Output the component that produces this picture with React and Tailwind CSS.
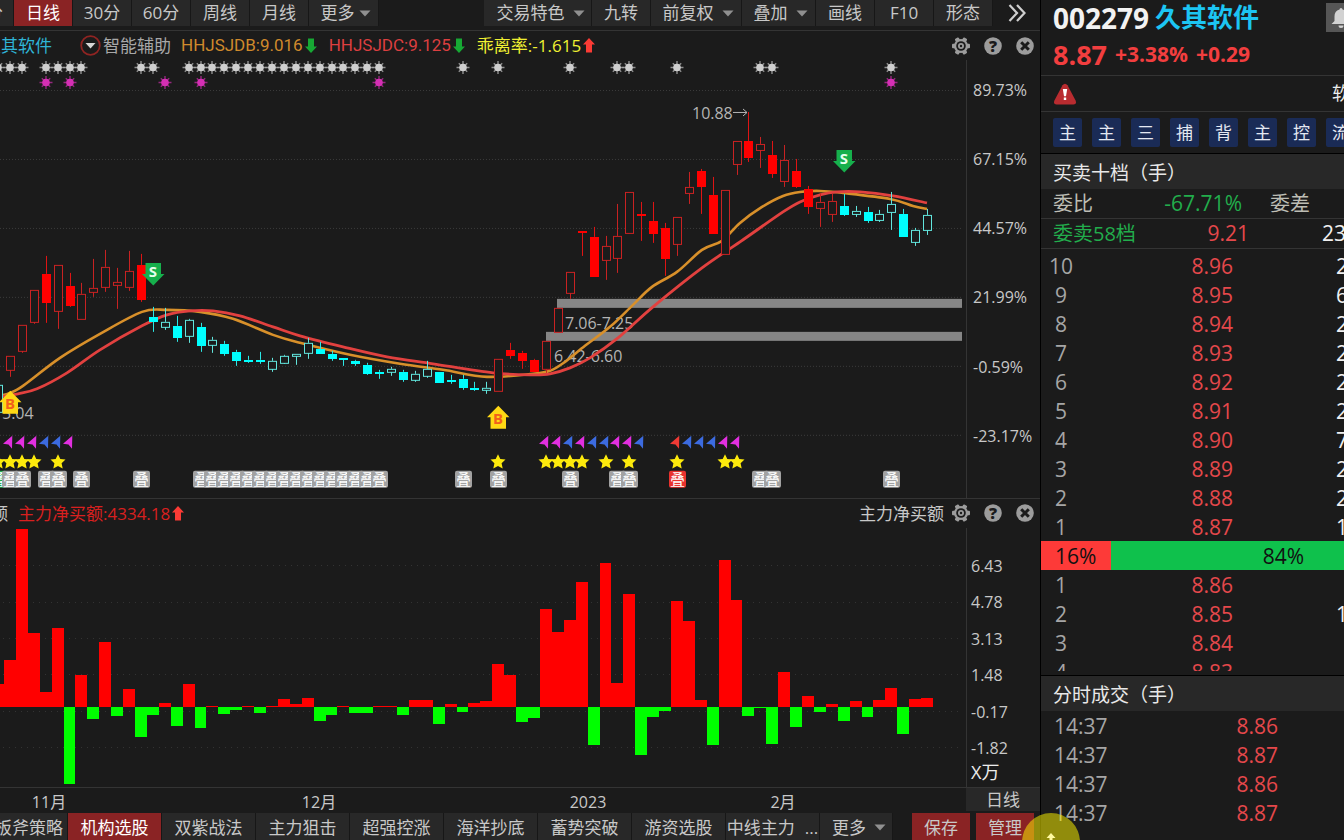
import React from 'react';
import clsx from 'clsx';

const STEP = 11.91;
const centerX = (i) => Math.round(10 + STEP * i);
const barX = (i) => Math.round(4 + STEP * i);
const range = (from, to) => Array.from({ length: to - from + 1 }, (_, i) => from + i);

// [high, bodyTop, bodyBottom, low, type]  u/d = red hollow/filled, c/f = cyan hollow/filled
const candles = [
  [385, 385, 412, 412, 'c'], [356, 356, 370, 377, 'u'], [325, 325, 351, 353, 'u'], [290, 290, 322, 324, 'u'],
  [256, 274, 303, 323, 'd'], [265, 265, 311, 329, 'u'], [273, 286, 306, 307, 'd'], [283, 294, 319, 319, 'u'],
  [259, 288, 292, 297, 'u'], [250, 267, 287, 292, 'u'], [268, 282, 285, 309, 'u'], [251, 271, 287, 291, 'u'],
  [254, 265, 300, 302, 'd'], [307, 317, 322, 332, 'f'], [308, 322, 327, 330, 'c'], [316, 326, 338, 342, 'f'],
  [319, 320, 336, 343, 'c'], [323, 327, 346, 352, 'f'], [337, 340, 345, 353, 'c'], [341, 344, 354, 356, 'f'],
  [350, 352, 361, 366, 'f'], [356, 360, 362, 363, 'f'], [352, 360, 362, 364, 'f'], [358, 361, 369, 372, 'c'],
  [355, 356, 363, 364, 'c'], [354, 354, 356, 365, 'c'], [338, 343, 353, 359, 'c'], [342, 349, 354, 354, 'f'],
  [351, 354, 359, 361, 'f'], [358, 358, 360, 366, 'f'], [360, 361, 364, 366, 'f'], [363, 365, 374, 375, 'f'],
  [370, 372, 374, 379, 'f'], [367, 369, 372, 376, 'c'], [370, 372, 380, 382, 'f'], [371, 374, 380, 382, 'c'],
  [361, 369, 376, 378, 'c'], [372, 372, 383, 383, 'f'], [375, 380, 382, 384, 'f'], [375, 379, 388, 390, 'f'],
  [382, 388, 390, 391, 'f'], [382, 388, 390, 394, 'c'], [359, 359, 391, 391, 'u'], [343, 350, 356, 359, 'd'],
  [351, 353, 361, 369, 'd'], [359, 360, 372, 372, 'd'], [341, 341, 369, 373, 'u'], [308, 308, 332, 332, 'u'],
  [272, 272, 293, 299, 'u'], [231, 231, 233, 256, 'd'], [227, 237, 277, 277, 'd'], [236, 246, 260, 280, 'u'],
  [204, 236, 258, 273, 'u'], [192, 192, 233, 233, 'u'], [202, 214, 216, 241, 'd'], [202, 221, 234, 243, 'd'],
  [223, 228, 259, 276, 'd'], [217, 217, 244, 256, 'u'], [172, 187, 193, 204, 'u'], [169, 171, 187, 214, 'd'],
  [177, 195, 234, 234, 'd'], [190, 190, 254, 254, 'u'], [141, 141, 164, 175, 'u'], [112, 141, 158, 162, 'd'],
  [137, 144, 150, 168, 'u'], [141, 155, 174, 178, 'd'], [145, 160, 181, 187, 'u'], [159, 171, 187, 188, 'd'],
  [186, 189, 207, 214, 'd'], [193, 202, 208, 227, 'u'], [194, 201, 214, 222, 'u'], [194, 206, 215, 216, 'f'],
  [206, 211, 214, 217, 'c'], [207, 212, 221, 223, 'f'], [210, 214, 220, 222, 'c'], [192, 204, 212, 230, 'c'],
  [209, 214, 237, 237, 'f'], [228, 230, 242, 246, 'c'], [209, 215, 230, 235, 'c'],
];

// y of the bar's end, red above the base line and green below it
const BASE = 707;
const flows = [
  684, 660, 529, 633, 692, 628, 784, 675, 719, 642, 716, 689, 737, 715, 703, 726, 684, 728, 706, 714,
  710, 706, 713, 706, 699, 704, 698, 721, 715, 706, 713, 713, 706, 706, 715, 700, 700, 724, 704, 712,
  703, 701, 664, 675, 722, 718, 609, 632, 620, 582, 745, 563, 683, 594, 755, 717, 711, 601, 621, 700,
  745, 560, 600, 716, 708, 744, 672, 727, 696, 712, 704, 721, 701, 717, 700, 688, 734, 699, 698,
];

const fastLine = [
  [0, 396], [10, 393], [23, 386], [60, 358], [100, 334], [142, 312], [167, 310], [200, 312], [233, 319],
  [273, 335], [300, 343], [350, 355], [400, 364], [443, 370], [487, 377], [533, 374], [550, 371], [565, 362],
  [585, 346], [610, 327], [633, 305], [652, 287], [677, 272], [702, 250], [722, 241], [740, 223], [762, 207],
  [783, 196], [800, 192], [820, 191], [843, 193], [890, 199], [913, 206], [927, 209],
];
const slowLine = [
  [0, 397], [18, 394], [37, 389], [67, 373], [100, 350], [142, 326], [167, 315], [190, 311], [213, 311],
  [240, 316], [273, 327], [300, 336], [343, 347], [387, 357], [433, 364], [493, 373], [533, 375], [550, 374],
  [570, 368], [590, 358], [618, 338], [653, 307], [702, 268], [740, 242], [783, 212], [800, 202], [820, 195],
  [837, 192], [860, 192], [893, 196], [927, 203],
];

const graySuns = [-1, 0, 1, 3, 4, 5, 6, 11, 12, ...range(15, 31), 38, 41, 47, 51, 52, 56, 63, 64, 74];
const pinkSuns = [3, 5, 13, 16, 31, 74];
const stars = [-1, 0, 1, 2, 4, 41, 45, 46, 47, 48, 50, 52, 56, 60, 61];
const stacks = [-1, 0, 1, 3, 4, 6, 11, ...range(16, 31), 38, 41, 47, 51, 52, 56, 63, 64, 74];
const flags = [
  [0, 'm'], [1, 'm'], [2, 'm'], [3, 'b'], [4, 'b'], [5, 'm'], [45, 'm'], [46, 'm'], [47, 'b'], [48, 'm'], [49, 'b'],
  [50, 'b'], [51, 'm'], [52, 'm'], [53, 'b'], [56, 'r'], [57, 'b'], [58, 'b'], [59, 'b'], [60, 'm'], [61, 'm'],
];
const flagColors = { m: '#e22fe0', b: '#3c6be0', r: '#f03a35' };

const periods = ['30分', '60分', '周线', '月线'];
const strategies = ['双紫战法', '主力狙击', '超强控涨', '海洋抄底', '蓄势突破', '游资选股'];
const tags = ['主', '主', '三', '捕', '背', '主', '控', '流'];
const sells = [
  [10, '8.96', '2'], [9, '8.95', '6'], [8, '8.94', '2'], [7, '8.93', '2'], [6, '8.92', '2'],
  [5, '8.91', '2'], [4, '8.90', '7'], [3, '8.89', '2'], [2, '8.88', '2'], [1, '8.87', '1'],
];
const buys = [[1, '8.86', ''], [2, '8.85', '1'], [3, '8.84', ''], [4, '8.83', '']];
const trades = [['14:37', '8.86'], ['14:37', '8.87'], ['14:37', '8.86'], ['14:37', '8.87']];

function smooth(points) {
  return points.reduce((d, p, i) => {
    if (i === 0) return `M${p[0]} ${p[1]}`;
    const a = points[i - 1];
    const before = points[i - 2] || a;
    const after = points[i + 1] || p;
    const c1 = [a[0] + (p[0] - before[0]) / 6, a[1] + (p[1] - before[1]) / 6];
    const c2 = [p[0] - (after[0] - a[0]) / 6, p[1] - (after[1] - a[1]) / 6];
    return `${d} C${c1[0]} ${c1[1]} ${c2[0]} ${c2[1]} ${p[0]} ${p[1]}`;
  }, '');
}

const Caret = () => (
  <svg className="h-[7px] w-3 shrink-0" viewBox="0 0 12 7" aria-hidden="true">
    <path d="M0.5 0.5H11.5L6 6.5Z" fill="#909090" />
  </svg>
);

const Arrow = ({ up }) => (
  <svg className="h-[15px] w-3 shrink-0" viewBox="0 0 12 15" aria-hidden="true">
    {up ? (
      <path d="M6 0L12 6.5H9V14.5H3V6.5H0Z" fill="#fb3b35" />
    ) : (
      <path d="M6 15L12 8.5H9V0.5H3V8.5H0Z" fill="#17a834" />
    )}
  </svg>
);

const PanelButtons = () => (
  <div className="flex shrink-0 items-center gap-3.5 pr-1.5">
    <button type="button" aria-label="设置">
      <svg className="size-[18px]" viewBox="0 0 18 18">
        <g fill="#9c9c9c">
          <circle cx="9" cy="9" r="7" />
          <rect x="0" y="6.8" width="18" height="4.4" rx="1" />
          <rect x="0" y="6.8" width="18" height="4.4" rx="1" transform="rotate(60 9 9)" />
          <rect x="0" y="6.8" width="18" height="4.4" rx="1" transform="rotate(120 9 9)" />
        </g>
        <circle cx="9" cy="9" r="4.8" fill="#1b1b1b" />
        <circle cx="9" cy="9" r="3" fill="#9c9c9c" />
        <circle cx="9" cy="9" r="1.2" fill="#1b1b1b" />
      </svg>
    </button>
    <button type="button" aria-label="帮助">
      <svg className="size-[18px]" viewBox="0 0 18 18">
        <circle cx="9" cy="9" r="8.8" fill="#9c9c9c" />
        <text x="9" y="14.8" textAnchor="middle" fontSize="16" fontWeight="800" fill="#1b1b1b">?</text>
      </svg>
    </button>
    <button type="button" aria-label="关闭">
      <svg className="size-[18px]" viewBox="0 0 18 18">
        <circle cx="9" cy="9" r="8.8" fill="#9c9c9c" />
        <path d="M5.2 5.2L12.8 12.8M12.8 5.2L5.2 12.8" stroke="#1b1b1b" strokeWidth="3" />
      </svg>
    </button>
  </div>
);

const ToolButton = ({ children, caret, active, className }) => (
  <button
    type="button"
    className={clsx(
      'flex h-full shrink-0 items-center justify-center border-r border-[#171717]',
      active ? 'bg-[#8a2324] text-white' : 'bg-[#282828] text-[#c8c8c8]',
      className
    )}
  >
    {children}
    {caret && <Caret />}
  </button>
);

const Sun = ({ x, y, color }) => (
  <g transform={`translate(${x} ${y})`} stroke={color} fill={color}>
    <path d="M-6.5 0H6.5M0 -6.5V6.5M-4.2 -4.2L4.2 4.2M-4.2 4.2L4.2 -4.2" strokeWidth="1.4" opacity="0.65" />
    <circle r="3.8" stroke="none" />
  </g>
);

const Candle = ({ x, data }) => {
  const [high, top, bottom, low, type] = data;
  const hollow = type === 'u' || type === 'c';
  const red = type === 'u' || type === 'd';
  const line = red ? (hollow ? '#c92222' : '#e01414') : hollow ? '#62e6de' : '#2ce9e6';
  return (
    <g shapeRendering="crispEdges">
      <path d={`M${x + 0.5} ${high}V${top}M${x + 0.5} ${bottom}V${low}`} stroke={line} />
      {hollow ? (
        <rect x={x - 3.5} y={top + 0.5} width="8" height={bottom - top} fill="#1b1b1b" stroke={line} />
      ) : (
        <rect x={x - 4} y={top} width="9" height={bottom - top} fill={red ? '#ff0000' : '#00ffff'} />
      )}
    </g>
  );
};

const SellMark = ({ x, y }) => (
  <g transform={`translate(${x} ${y})`}>
    <path d="M-7.500 0H8V11H11.500L0.300 22.500L-11 11H-7.500Z" fill="#16b04c" />
    <text x="0" y="14" textAnchor="middle" fontSize="15" fontWeight="700" fill="#e6ffee">S</text>
  </g>
);

const BuyMark = ({ x, y }) => (
  <g transform={`translate(${x} ${y})`}>
    <path d="M0.300 0L11.500 11.500H8V23H-7.500V11.500H-11Z" fill="#ffd814" />
    <text x="0" y="18" textAnchor="middle" fontSize="15" fontWeight="700" fill="#f2601c">B</text>
  </g>
);

const PriceChart = () => (
  <svg className="h-full min-w-0 flex-1" viewBox="0 60 966 438" preserveAspectRatio="none" role="img" aria-label="日线">
    <g stroke="#3c3c3c" strokeDasharray="1 2" shapeRendering="crispEdges">
      {[90, 159, 228, 297, 366, 435].map((y) => (
        <path key={y} d={`M0 ${y + 0.5}H962`} />
      ))}
    </g>
    {graySuns.map((i) => <Sun key={i} x={centerX(i)} y={67.5} color="#cfcfcf" />)}
    {pinkSuns.map((i) => <Sun key={i} x={centerX(i)} y={82.5} color="#d52fb4" />)}

    <rect x="557" y="299" width="405" height="9" fill="#868686" />
    <rect x="546" y="332" width="416" height="9" fill="#868686" />
    <g fill="#b4b4b4" fontSize="16">
      <text x="565" y="329">7.06-7.25</text>
      <text x="554" y="362">6.42-6.60</text>
      <text x="692" y="119">10.88</text>
      <text x="2" y="419">5.04</text>
    </g>
    <path d="M733 112.5H747M743 109L747 112.5L743 116" stroke="#b4b4b4" fill="none" />

    <path d={smooth(fastLine)} fill="none" stroke="#d8902a" strokeWidth="2.6" />
    <path d={smooth(slowLine)} fill="none" stroke="#e2413f" strokeWidth="2.8" />
    {candles.map((c, i) => <Candle key={i} x={centerX(i - 1)} data={c} />)}

    <SellMark x={153} y={263} />
    <SellMark x={844} y={150} />
    <BuyMark x={10} y={391} />
    <BuyMark x={498} y={406} />

    {flags.map(([i, c]) => (
      <path
        key={i}
        transform={`translate(${centerX(i)} 442)`}
        d="M2.3 -6L-7 2L-1.5 2.6L2 7Z"
        fill={flagColors[c]}
      />
    ))}
    {stars.map((i) => (
      <path
        key={i}
        transform={`translate(${centerX(i)} 462)`}
        d="M0 -7.5L2.3 -2.8L7.5 -2.2L3.6 1.4L4.7 6.8L0 4.2L-4.7 6.8L-3.6 1.4L-7.5 -2.2L-2.3 -2.8Z"
        fill="#fdea0c"
      />
    ))}
    {stacks.map((i) => (
      <g key={i} transform={`translate(${centerX(i)} 471)`}>
        <rect x="-8" width="17" height="17" rx="2" fill={i === 56 ? '#e8322e' : i < 0 ? '#1fae50' : '#a2a2a2'} />
        <text x="0.5" y="14" textAnchor="middle" fontSize="15" fill="#ffffff">叠</text>
      </g>
    ))}
  </svg>
);

const FlowChart = () => (
  <svg className="h-full min-w-0 flex-1" viewBox="0 528 966 259" preserveAspectRatio="none" role="img" aria-label="主力净买额">
    <g stroke="#333333" strokeDasharray="1 5" shapeRendering="crispEdges">
      {[565, 602, 638, 674, 711, 747].map((y) => (
        <path key={y} d={`M3 ${y + 0.5}H962`} />
      ))}
    </g>
    <g shapeRendering="crispEdges">
      {flows.map((end, i) => {
        const x = barX(i - 1);
        return (
          <rect
            key={i}
            x={x}
            y={Math.min(end, BASE)}
            width={barX(i) - x}
            height={Math.abs(end - BASE)}
            fill={end > BASE ? '#00ff00' : '#ff0000'}
          />
        );
      })}
    </g>
  </svg>
);

const LevelTable = ({ rows, label }) => (
  <table className="w-full table-fixed border-collapse text-[21px] leading-[27px]" aria-label={label}>
    <colgroup>
      <col className="w-10" />
      <col className="w-[152px]" />
      <col />
    </colgroup>
    <tbody>
      {rows.map(([level, price, volume]) => (
        <tr key={level} className="h-[29px]">
          <th scope="row" className="p-0 pt-0.5 text-center font-normal text-[#a6a6a6]">{level}</th>
          <td className="p-0 pt-0.5 text-right text-[#e5484b]">{price}</td>
          <td className="p-0 pt-0.5 text-[#f0f0f0]">
            <span className="ml-auto block w-2">{volume}</span>
          </td>
        </tr>
      ))}
    </tbody>
  </table>
);

const Quotes = () => (
  <aside className="flex w-[304px] shrink-0 flex-col overflow-hidden border-l border-black">
    <header className="flex h-[76px] shrink-0 flex-col border-b border-[#343434] pl-3 font-bold">
      <div className="flex h-[35px] items-center gap-1.5">
        <span className="text-[28px] text-[#f2f2f2]">002279</span>
        <h1 className="text-[26px] text-[#1cc5f3]">久其软件</h1>
        <button type="button" aria-label="提醒" className="ml-auto flex h-[29px] w-[18px] items-center overflow-hidden bg-[#565656] pl-1">
          <svg className="size-[22px] shrink-0" viewBox="0 0 22 22" fill="#d2d2d2">
            <path d="M9.500 2.500a1.500 1.500 0 0 1 3 0C16 3.500 17.500 6 17.500 9.500V14L20.500 17H1.500L4.500 14V9.500C4.500 6 6 3.500 9.500 2.500ZM8.500 18.500H13.500a2.500 2.500 0 0 1-5 0Z" />
          </svg>
        </button>
      </div>
      <div className="flex h-[40px] items-center gap-2 text-[21px] text-[#f23e3f]">
        <span className="text-[27px]">8.87</span>
        <span>+3.38%</span>
        <span>+0.29</span>
      </div>
    </header>
    <div className="flex h-9 shrink-0 items-center justify-between border-b border-[#343434] pl-3 text-[18px] text-[#ededed]">
      <svg className="h-[22px] w-6" viewBox="0 0 24 22" role="img" aria-label="风险提示">
        <path d="M9.500 2.200Q12 -0.800 14.500 2.200L22.600 17.500Q24 21.500 20.500 21.500H3.500Q0 21.500 1.400 17.500Z" fill="#b92c30" />
        <path d="M9.800 6H14.200L13 13.200H11ZM10.800 14.600H13.200V17H10.800Z" fill="#ffffff" />
      </svg>
      <span className="w-3 whitespace-nowrap">软件</span>
    </div>
    <div className="flex h-[42px] shrink-0 items-center gap-2.5 border-b border-black pl-3">
      {tags.map((tag, i) => (
        <button key={i} type="button" className="size-[29px] shrink-0 rounded-[2px] bg-[#1a2b56] text-[17px] text-[#e4e8f2]">
          {tag}
        </button>
      ))}
    </div>

    <h2 className="h-[35px] shrink-0 bg-[#282828] pl-3 text-[19px] leading-[38px] text-[#e8e8e8]">买卖十档（手）</h2>
    <div className="flex h-[30px] shrink-0 items-center border-b border-[#343434] pl-3 text-[20px] text-[#bdbdb4]">
      <span>委比</span>
      <span className="w-[149px] text-right text-[21px] text-[#22ad4c]">-67.71%</span>
      <span className="pl-7">委差</span>
    </div>
    <div className="flex h-[30px] shrink-0 items-center border-b border-[#343434] pl-3 text-[20px]">
      <span className="w-[86px] whitespace-nowrap text-[#22ad4c]">委卖58档</span>
      <span className="w-[110px] text-right text-[21px] text-[#e5484b]">9.21</span>
      <span className="ml-auto w-[22px] text-[21px] text-[#f0f0f0]">23</span>
    </div>
    <div className="flex min-h-0 flex-1 flex-col overflow-hidden pt-0.5">
      <LevelTable rows={sells} label="卖盘" />
      <div className="flex h-[29px] shrink-0 text-[21px] leading-[27px] text-[#111111]">
        <span className="w-[70px] bg-[#fd3a38] pt-0.5 pl-3.5">16%</span>
        <span className="flex-1 bg-[#0fc14c] pt-0.5 pr-10 text-right">84%</span>
      </div>
      <div className="min-h-0 flex-1 overflow-hidden">
        <LevelTable rows={buys} label="买盘" />
      </div>
    </div>
    <h2 className="mt-1 h-9 shrink-0 border-t border-black bg-[#282828] pl-3 text-[19px] leading-[38px] text-[#e8e8e8]">
      分时成交（手）
    </h2>
    <div className="h-[129px] shrink-0">
      <table className="w-full table-fixed border-collapse text-[21px] leading-[27px]" aria-label="分时成交">
        <colgroup>
          <col className="w-20" />
          <col className="w-[157px]" />
          <col />
        </colgroup>
        <tbody>
          {trades.map(([time, price], i) => (
            <tr key={i} className="h-[29px]">
              <td className="p-0 pt-0.5 pl-[13px] text-[#a6a6a6]">{time}</td>
              <td className="p-0 pt-0.5 text-right text-[#e5484b]">{price}</td>
              <td />
            </tr>
          ))}
        </tbody>
      </table>
    </div>
  </aside>
);

export default function App() {
  return (
    <div className="relative flex h-screen overflow-hidden bg-[#1b1b1b] font-['Open_Sans','Noto_Sans_CJK_SC',sans-serif] text-[#c8c8c8]">
      <main className="flex min-w-0 flex-1 flex-col overflow-hidden">
        <nav className="flex h-[31px] shrink-0 border-b border-[#343434] pb-1 text-[17px]">
          <div className="flex">
            <ToolButton className="w-3.5 justify-end overflow-hidden pr-2.5 whitespace-nowrap">15分</ToolButton>
            <ToolButton active className="w-[59px]">日线</ToolButton>
            {periods.map((p) => (
              <ToolButton key={p} className="w-[59px]">{p}</ToolButton>
            ))}
            <ToolButton caret className="w-[70px] gap-1 pl-1">更多</ToolButton>
          </div>
          <div className="ml-auto flex">
            <ToolButton caret className="w-[108px] gap-2 pl-1.5">交易特色</ToolButton>
            <ToolButton className="w-[59px]">九转</ToolButton>
            <ToolButton caret className="w-[91px] gap-2 pl-1">前复权</ToolButton>
            <ToolButton caret className="w-[74px] gap-2 pl-1">叠加</ToolButton>
            <ToolButton className="w-[59px]">画线</ToolButton>
            <ToolButton className="w-[59px]">F10</ToolButton>
            <ToolButton className="w-[59px]">形态</ToolButton>
            <button type="button" aria-label="展开" className="flex w-[47px] items-center justify-center">
              <svg className="h-[18px] w-[18px]" viewBox="0 0 18 18" fill="none" stroke="#cfcfcf" strokeWidth="2.2">
                <path d="M1.500 1L9 9L1.500 17M9 1L16.500 9L9 17" />
              </svg>
            </button>
          </div>
        </nav>

        <section className="flex min-h-0 flex-[468_1_0%] flex-col border-b border-[#343434]">
          <div className="flex h-[29px] shrink-0 items-center justify-between text-[17px]">
            <div className="flex items-center whitespace-nowrap">
              <span className="flex w-[52px] justify-end overflow-hidden text-[#2fb4d6]">久其软件</span>
              <button type="button" className="ml-7 flex items-center gap-0.5 text-[#a8a8a8]">
                <svg className="size-[21px]" viewBox="0 0 21 21" aria-hidden="true">
                  <circle cx="10.500" cy="10.500" r="9.300" fill="none" stroke="#8f2422" strokeWidth="1.800" />
                  <path d="M5.500 8H15.500L10.500 13.500Z" fill="#d6d6d6" />
                </svg>
                智能辅助
              </button>
              <span className="ml-2.5 flex items-center gap-0.5 font-['Roboto'] text-[#cf8a2c]">
                HHJSJDB:9.016
                <Arrow />
              </span>
              <span className="ml-3 flex items-center gap-0.5 font-['Roboto'] text-[#dc3f40]">
                HHJSJDC:9.125
                <Arrow />
              </span>
              <span className="ml-3 flex items-center gap-0.5 text-[#f0f032]">
                乖离率:-1.615
                <Arrow up />
              </span>
            </div>
            <PanelButtons />
          </div>
          <div className="flex min-h-0 flex-1">
            <PriceChart />
            <div className="flex w-[74px] shrink-0 flex-col justify-between border-l border-[#343434] pt-[18px] pb-[50px] pl-1.5 text-[16px] leading-6">
              <span>89.73%</span>
              <span>67.15%</span>
              <span>44.57%</span>
              <span>21.99%</span>
              <span>-0.59%</span>
              <span>-23.17%</span>
            </div>
          </div>
        </section>

        <section className="flex min-h-0 flex-[289_1_0%] flex-col border-b border-[#343434]">
          <div className="flex h-[29px] shrink-0 items-center justify-between text-[17px]">
            <div className="flex items-center gap-2.5 whitespace-nowrap">
              <span className="flex w-2 justify-end overflow-hidden">主力净买额</span>
              <span className="flex items-center gap-0.5 text-[#d8201f]">
                主力净买额:4334.18
                <Arrow up />
              </span>
            </div>
            <div className="flex items-center gap-2">
              <span>主力净买额</span>
              <PanelButtons />
            </div>
          </div>
          <div className="flex min-h-0 flex-1">
            <FlowChart />
            <div className="flex w-[74px] shrink-0 flex-col border-l border-[#343434] pt-[26px] pb-[3px] pl-1 text-[16px] leading-6">
              <div className="flex flex-1 flex-col justify-between">
                <span>6.43</span>
                <span>4.78</span>
                <span>3.13</span>
                <span>1.48</span>
                <span>-0.17</span>
                <span>-1.82</span>
              </div>
              <span className="text-[18px] text-[#ececec]">X万</span>
            </div>
          </div>
        </section>

        <div className="flex h-[25px] shrink-0 pb-0.5 text-[16px]">
          <svg className="h-full min-w-0 flex-1" viewBox="0 0 966 23" preserveAspectRatio="none" fill="#c8c8c8" fontSize="16" textAnchor="middle">
            <text x="49" y="20">11月</text>
            <text x="319" y="20">12月</text>
            <text x="588" y="20">2023</text>
            <text x="783" y="20">2月</text>
          </svg>
          <button type="button" className="flex w-[74px] items-center justify-center bg-[#282828] text-[17px]">日线</button>
        </div>

        <nav className="flex h-[27px] shrink-0 text-[17px] whitespace-nowrap">
          <ToolButton className="w-[68px] justify-end overflow-hidden pt-0.5 pr-1">三板斧策略</ToolButton>
          <ToolButton active className="w-[94px] pt-0.5">机构选股</ToolButton>
          {strategies.map((s) => (
            <ToolButton key={s} className="w-[94px] pt-0.5">{s}</ToolButton>
          ))}
          <ToolButton className="w-[94px] gap-2.5 pt-0.5">
            <span>中线主力</span>
            <span>...</span>
          </ToolButton>
          <ToolButton caret className="w-[73px] gap-2 pt-0.5 pl-1.5">更多</ToolButton>
          <div className="ml-auto flex gap-1.5 pr-1.5">
            <button type="button" className="w-[58px] bg-[#8a2324] pt-0.5">保存</button>
            <button type="button" className="w-[58px] bg-[#8a2324] pt-0.5">管理</button>
          </div>
        </nav>
      </main>

      <Quotes />

      {/* pointer highlight */}
      <svg className="pointer-events-none absolute right-[264px] bottom-0 h-[27px] w-[58px]" viewBox="0 0 58 27" aria-hidden="true">
        <circle cx="29" cy="29" r="29" fill="#fff500" opacity="0.52" />
        <path d="M29 20L33.500 25H30.500V27H27.500V25H24.500Z" fill="#fff9a0" />
      </svg>
    </div>
  );
}
